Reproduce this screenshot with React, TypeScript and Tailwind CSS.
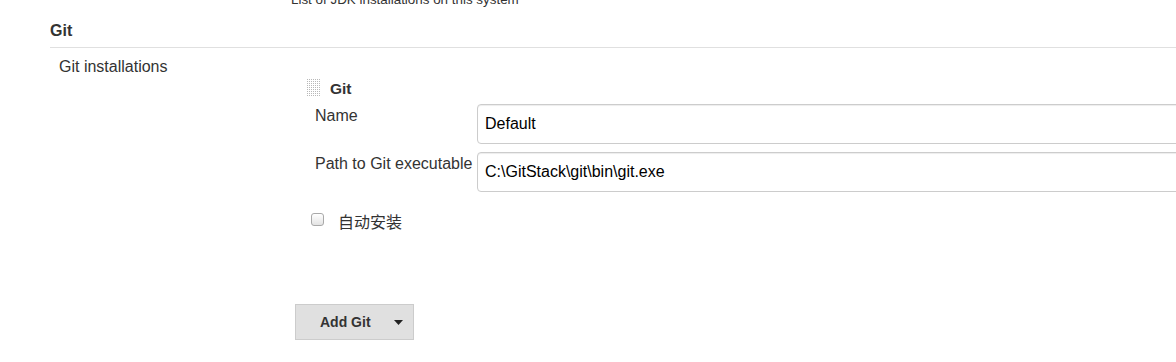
export default function App() {
	return (
		<div
			className="w-[1176px] h-[362px] overflow-hidden bg-white text-[#333] flex flex-col"
			style={{ fontFamily: '"Liberation Sans", Arial, "Noto Sans CJK SC", sans-serif' }}
		>
			<p className="-mt-[8px] pl-[291px] text-[13.4px] leading-[16px] whitespace-nowrap">
				List of JDK installations on this system
			</p>

			<div className="mt-[14px] ml-[50px] pb-[7px] border-b border-[#e0e0e0] text-[16px] leading-[18px] font-bold">
				Git
			</div>

			<div className="mt-[10px] flex">
				<div className="ml-[59px] w-[236px] shrink-0 text-[16px] leading-[18px] whitespace-nowrap">
					Git installations
				</div>

				<div className="flex flex-col">
					<div className="mt-[20px] flex items-start">
						<svg className="ml-[12px] mt-[1px]" width="14" height="18" viewBox="0 0 14 18">
							<defs>
								<pattern id="dots" width="2" height="2" patternUnits="userSpaceOnUse">
									<rect width="1" height="1" fill="#b8b8b8" />
								</pattern>
							</defs>
							<rect width="14" height="18" fill="url(#dots)" />
						</svg>
						<span className="ml-[9px] mt-[2px] text-[15.5px] leading-[18px] font-bold">Git</span>
					</div>

					<div className="mt-[6px] pl-[20px] flex">
						<div className="w-[162px] shrink-0 pt-[3px] text-[16px] leading-[18px]">Name</div>
						<input
							readOnly
							value="Default"
							className="shrink-0 w-[720px] h-[40px] px-[7px] border border-[#ccc] rounded-[4px] text-[16px] text-black bg-white shadow-[inset_0_1px_1px_rgba(0,0,0,0.075)] outline-none"
						/>
					</div>

					<div className="mt-[8px] pl-[20px] flex">
						<div className="w-[162px] shrink-0 pt-[3px] text-[16px] leading-[18px] whitespace-nowrap">
							Path to Git executable
						</div>
						<input
							readOnly
							value="C:\GitStack\git\bin\git.exe"
							className="shrink-0 w-[720px] h-[40px] px-[7px] border border-[#ccc] rounded-[4px] text-[16px] text-black bg-white shadow-[inset_0_1px_1px_rgba(0,0,0,0.075)] outline-none"
						/>
					</div>

					<div className="mt-[19px] pl-[16px] flex items-start">
						<div className="mt-[2px] w-[13px] h-[13px] rounded-[3px] border border-[#a9a9a9] bg-gradient-to-b from-white to-[#e3e3e3]" />
						<span
							className="ml-[14px] text-[16px] leading-[20px]"
							style={{ fontFamily: '"Noto Sans CJK SC", sans-serif' }}
						>
							自动安装
						</span>
					</div>

					<button className="mt-[73px] w-[119px] h-[36px] flex items-center bg-[#e0e0e0] border border-[#ccc] text-[14px] font-bold text-[#333]">
						<span className="ml-[24px]">Add Git</span>
						<svg className="ml-[23px]" width="9" height="5" viewBox="0 0 9 5">
							<path d="M0 0 L9 0 L4.5 5 Z" fill="#222" />
						</svg>
					</button>
				</div>
			</div>
		</div>
	);
}
